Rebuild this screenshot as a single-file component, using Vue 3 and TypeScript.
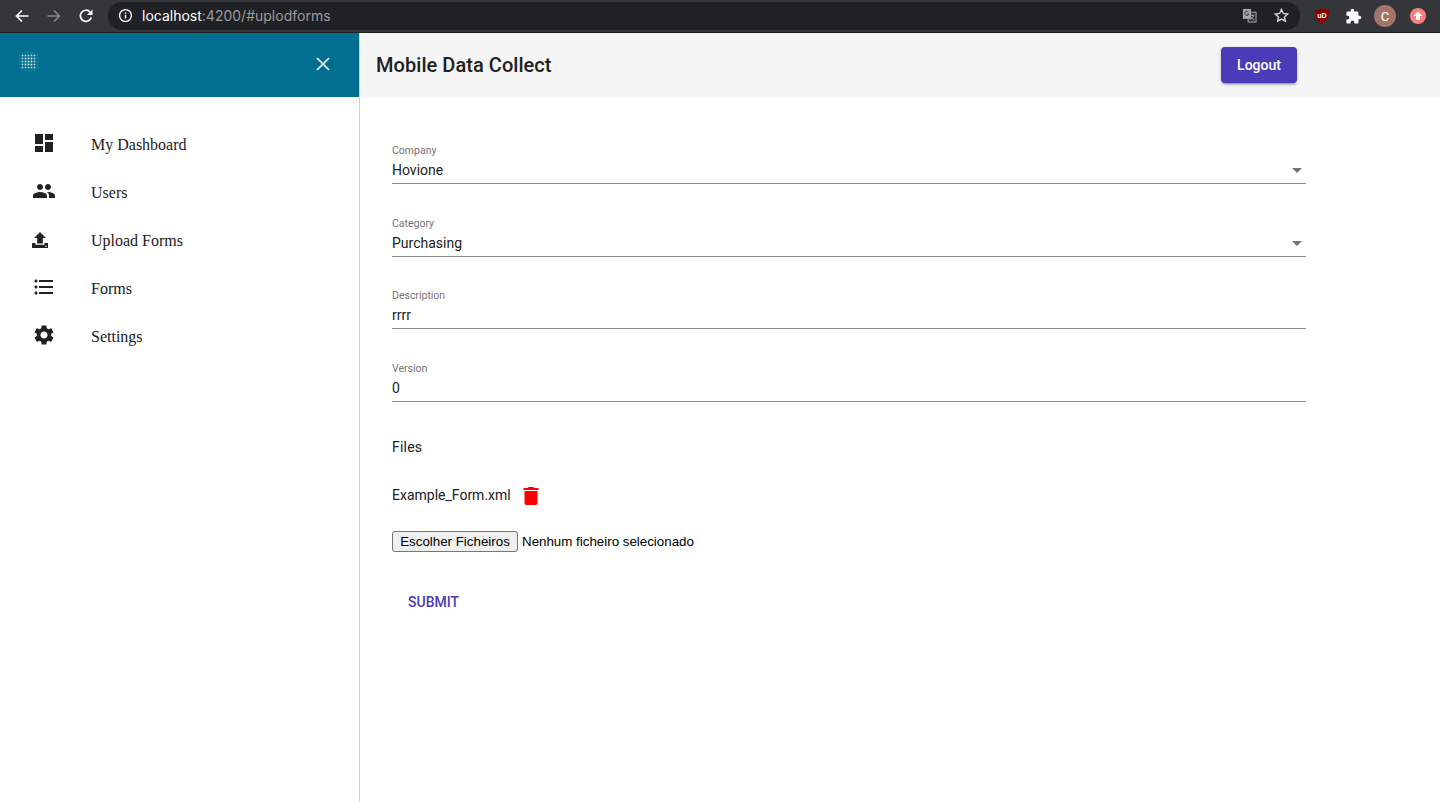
<script setup lang="ts">
interface NavItem {
  label: string;
  icon: string;
  dot?: boolean;
}

const navItems: NavItem[] = [
  { label: 'My Dashboard', icon: 'M3 13h8V3H3v10zm0 8h8v-6H3v6zm10 0h8V11h-8v10zm0-18v6h8V3h-8z' },
  { label: 'Users', icon: 'M16 11c1.66 0 2.99-1.34 2.99-3S17.66 5 16 5s-3 1.34-3 3 1.34 3 3 3zm-8 0c1.66 0 2.99-1.34 2.99-3S9.66 5 8 5 5 6.34 5 8s1.34 3 3 3zm0 2c-2.33 0-7 1.17-7 3.5V19h14v-2.5C15 14.17 10.33 13 8 13zm8 0c-.29 0-.62.02-.97.05 1.16.84 1.97 1.97 1.97 3.45V19h6v-2.5c0-2.33-4.67-3.5-7-3.5z' },
  { label: 'Upload Forms', icon: 'M8 5l6 6h-3.200v5.500H5.200V11H2zM0 16h3.500v1.800h9V16H16v5H0z', dot: true },
  { label: 'Forms', icon: 'M4 10.5c-.83 0-1.5.67-1.5 1.5s.67 1.5 1.5 1.5 1.5-.67 1.5-1.5-.67-1.5-1.5-1.5zm0-6c-.83 0-1.5.67-1.5 1.5S3.17 7.5 4 7.5 5.5 6.83 5.5 6 4.83 4.5 4 4.5zm0 12c-.83 0-1.5.68-1.5 1.5s.68 1.5 1.5 1.5 1.5-.68 1.5-1.5-.67-1.5-1.5-1.5zM7 19h14v-2H7v2zm0-6h14v-2H7v2zm0-8v2h14V5H7z' },
  { label: 'Settings', icon: 'M19.14 12.94c.04-.3.06-.61.06-.94 0-.32-.02-.64-.07-.94l2.03-1.58c.18-.14.23-.41.12-.61l-1.92-3.32c-.12-.22-.37-.29-.59-.22l-2.39.96c-.5-.38-1.03-.7-1.62-.94l-.36-2.54c-.04-.24-.24-.41-.48-.41h-3.84c-.24 0-.43.17-.47.41l-.36 2.54c-.59.24-1.13.57-1.62.94l-2.39-.96c-.22-.08-.47 0-.59.22L2.74 8.87c-.12.21-.08.47.12.61l2.03 1.58c-.05.3-.09.63-.09.94s.02.64.07.94l-2.03 1.58c-.18.14-.23.41-.12.61l1.92 3.32c.12.22.37.29.59.22l2.39-.96c.5.38 1.03.7 1.62.94l.36 2.54c.05.24.24.41.48.41h3.84c.24 0 .44-.17.47-.41l.36-2.54c.59-.24 1.13-.56 1.62-.94l2.39.96c.22.08.47 0 .59-.22l1.92-3.32c.12-.22.07-.47-.12-.61l-2.01-1.58zM12 15.6c-1.98 0-3.6-1.62-3.6-3.6s1.62-3.6 3.6-3.6 3.6 1.62 3.6 3.6-1.62 3.6-3.6 3.6z' },
];

interface Field {
  label: string;
  value: string;
  select: boolean;
}

const fields: Field[] = [
  { label: 'Company', value: 'Hovione', select: true },
  { label: 'Category', value: 'Purchasing', select: true },
  { label: 'Description', value: 'rrrr', select: false },
  { label: 'Version', value: '0', select: false },
];

// dot grid of the small logo, brighter towards the middle
const dots: { x: number; y: number; o: number }[] = [];
for (let x = 0; x < 7; x++) {
  for (let y = 0; y < 7; y++) {
    const d = Math.hypot(x - 3, y - 3);
    if (d < 3.7) {
      let o = 0.15;
      if (d < 1.5) o = 1;
      else if (d < 2.9) o = 0.75;
      dots.push({ x: x * 3 + 1.5, y: y * 3 + 1.5, o });
    }
  }
}
</script>

<template>
  <div class="page">
    <div class="browser-bar">
      <svg class="bar-icon" viewBox="0 0 16 16" width="16" height="16"><path d="M14.5 8H2.5M8 2.5 2.5 8 8 13.5" fill="none" stroke="#fff" stroke-width="1.7" /></svg>
      <svg class="bar-icon" viewBox="0 0 16 16" width="16" height="16"><path d="M1.5 8h12M8 2.5 13.5 8 8 13.5" fill="none" stroke="#85868a" stroke-width="1.7" /></svg>
      <svg class="bar-icon" viewBox="0 0 16 16" width="16" height="16"><path d="M13.3 9.6A5.6 5.6 0 1 1 12 3.9" fill="none" stroke="#fff" stroke-width="1.7" /><path d="M14.5 1.5v5.6H8.9z" fill="#fff" /></svg>
      <div class="omnibox">
        <svg viewBox="0 0 16 16" width="15" height="15"><circle cx="8" cy="8" r="6.3" fill="none" stroke="#fff" stroke-width="1.4" /><path d="M8 7.2v4M8 4.6v1.5" stroke="#fff" stroke-width="1.5" /></svg>
        <span class="url"><span class="url-host">localhost</span>:4200/#uplodforms</span>
        <div class="omni-right">
          <svg viewBox="0 0 16 16" width="15" height="15"><rect x="6.500" y="4.500" width="8.500" height="10.500" fill="#35363a" stroke="#a8a9ac" /><path d="M8.500 8h4.500M10.700 7v1M12.300 8c-.4 2-1.800 3.500-3.500 4.300M9.500 9.500c.7 1.300 1.900 2.400 3.500 3" stroke="#a8a9ac" stroke-width=".9" fill="none" /><rect x="1" y="1" width="8.500" height="10.500" fill="#a8a9ac" /><path d="M7 4.300a2.300 2.300 0 1 0 .4 2.200H5.200" stroke="#35363a" stroke-width="1" fill="none" /></svg>
          <svg viewBox="0 0 24 24" width="17" height="17"><path d="m12 3.5 2.6 5.6 6.1.7-4.5 4.2 1.2 6.1-5.4-3-5.4 3 1.2-6.1-4.5-4.2 6.1-.7z" fill="none" stroke="#d5d6d8" stroke-width="2" /></svg>
        </div>
      </div>
      <div class="extensions">
        <svg viewBox="0 0 16 16" width="16" height="16"><path d="M8 .3 15 2.500c0 6.500-1.500 10.500-7 13.200C2.500 13 1 9 1 2.500z" fill="#8a0000" /><text x="8" y="10" class="ub-text" text-anchor="middle">uD</text></svg>
        <svg viewBox="0 0 24 24" width="17" height="17"><path d="M20.500 11H19V7c0-1.100-.9-2-2-2h-4V3.500a2.500 2.500 0 0 0-5 0V5H4c-1.100 0-2 .9-2 2v3.800h1.500a2.700 2.700 0 0 1 0 5.400H2V20c0 1.100.9 2 2 2h3.800v-1.500a2.700 2.700 0 0 1 5.400 0V22H17c1.100 0 2-.9 2-2v-4h1.500a2.500 2.500 0 0 0 0-5z" fill="#fff" /></svg>
        <span class="avatar">C</span>
        <svg class="ext-last" viewBox="0 0 16 16" width="16" height="16"><circle cx="8" cy="8" r="8" fill="#f98080" /><path d="M8 3.500 12.500 8H10v4H6V8H3.500z" fill="#fff" /></svg>
      </div>
    </div>

    <div class="shell">
      <aside class="sidebar">
        <div class="sidebar-head">
          <svg class="logo" viewBox="0 0 21 21" width="21" height="21">
            <rect v-for="(d, i) in dots" :key="i" :x="d.x - 0.8" :y="d.y - 0.8" width="1.6" height="1.6" fill="#fff" :opacity="d.o" />
          </svg>
          <svg class="close" viewBox="0 0 14 14" width="14" height="14"><path d="M1 1l12 12M13 1 1 13" stroke="#fff" stroke-width="1.7" /></svg>
        </div>
        <nav class="nav">
          <a v-for="item in navItems" :key="item.label" class="nav-item">
            <svg viewBox="0 0 24 24" width="24" height="24">
              <path :d="item.icon" fill="#212121" />
              <circle v-if="item.dot" cx="14" cy="19.300" r=".8" fill="#fff" />
            </svg>
            <span>{{ item.label }}</span>
          </a>
        </nav>
      </aside>

      <main class="main">
        <header class="topbar">
          <h1>Mobile Data Collect</h1>
          <button class="logout" type="button">Logout</button>
        </header>

        <form class="form" @submit.prevent>
          <div v-for="f in fields" :key="f.label" class="field">
            <label>{{ f.label }}</label>
            <div class="value">
              <span>{{ f.value }}</span>
              <i v-if="f.select" class="arrow"></i>
            </div>
          </div>

          <p class="files-title">Files</p>
          <div class="file-row">
            <span>Example_Form.xml</span>
            <svg viewBox="0 0 24 24" width="24" height="24"><path d="M5.500 19c0 1.100.9 2 2 2h9c1.100 0 2-.9 2-2V7h-13v12zM19.500 4h-4l-1-1h-5l-1 1h-4v2h15V4z" fill="#f00" /></svg>
          </div>
          <div class="file-input">
            <button type="button" class="choose">Escolher Ficheiros</button>
            <span>Nenhum ficheiro selecionado</span>
          </div>
          <button type="submit" class="submit">SUBMIT</button>
        </form>
      </main>
    </div>
  </div>
</template>

<style scoped>
.page {
  height: 802px;
  display: flex;
  flex-direction: column;
  overflow: hidden;
  font-family: Roboto, "Liberation Sans", sans-serif;
  color: #212121;
  background: #fff;
}

.browser-bar {
  height: 33px;
  flex: none;
  display: flex;
  align-items: center;
  padding-left: 14px;
  gap: 16px;
  background: #35363a;
  border-bottom: 1px solid #202124;
  box-sizing: border-box;
}
.bar-icon {
  flex: none;
}
.omnibox {
  flex: none;
  width: 1192px;
  height: 28px;
  margin-left: -2px;
  margin-top: -1px;
  display: flex;
  align-items: center;
  gap: 9px;
  padding: 0 10px;
  box-sizing: border-box;
  border-radius: 14px;
  background: #202124;
}
.url {
  font-family: Inter, "Liberation Sans", sans-serif;
  font-size: 14px;
  color: #9a9b9e;
}
.url-host {
  color: #fff;
}
.omni-right {
  margin-left: auto;
  display: flex;
  align-items: center;
  gap: 16px;
}
.extensions {
  flex: none;
  display: flex;
  align-items: center;
  gap: 15px;
  margin-left: -2px;
}
.ub-text {
  font-family: "Liberation Sans", sans-serif;
  font-size: 7px;
  font-weight: 700;
  fill: #fff;
}
.avatar {
  width: 22px;
  height: 22px;
  margin-left: -3px;
  border-radius: 50%;
  background: #a1756a;
  color: #fff;
  font-size: 13px;
  display: flex;
  align-items: center;
  justify-content: center;
}
.ext-last {
  margin-left: -1px;
}

.shell {
  flex: 1;
  display: flex;
  min-height: 0;
}

.sidebar {
  width: 360px;
  flex: none;
  box-sizing: border-box;
  border-right: 1px solid #d3d3d3;
}
.sidebar-head {
  height: 64px;
  display: flex;
  justify-content: space-between;
  align-items: flex-start;
  padding: 18px 29px 0 18px;
  box-sizing: border-box;
  background: #006f90;
}
.close {
  margin-top: 6px;
}
.nav {
  display: flex;
  flex-direction: column;
  padding-top: 24px;
}
.nav-item {
  height: 48px;
  display: flex;
  align-items: center;
  gap: 35px;
  padding-left: 32px;
  font-family: "Liberation Serif", serif;
  font-size: 16px;
  color: #212121;
}
.nav-item svg {
  margin-bottom: 4px;
}

.main {
  flex: 1;
  min-width: 0;
}
.topbar {
  height: 64px;
  display: flex;
  align-items: center;
  justify-content: space-between;
  padding: 0 143px 0 16px;
  box-sizing: border-box;
  background: #f5f5f5;
}
.topbar h1 {
  margin: 0;
  font-size: 20px;
  font-weight: 500;
  letter-spacing: 0.05px;
}
.logout {
  width: 76px;
  height: 36px;
  border: none;
  border-radius: 4px;
  background: #4a3cb8;
  color: #fff;
  font-family: inherit;
  font-size: 14px;
  font-weight: 500;
  box-shadow: 0 3px 1px -2px rgba(0, 0, 0, .2), 0 2px 2px 0 rgba(0, 0, 0, .14), 0 1px 5px 0 rgba(0, 0, 0, .12);
}

.form {
  width: 914px;
  margin-left: 32px;
  padding-top: 48px;
  font-size: 14px;
}
.field {
  height: 72.67px;
}
.field label {
  display: block;
  height: 12px;
  line-height: 12px;
  font-size: 10.5px;
  color: #757575;
}
.value {
  height: 27px;
  box-sizing: border-box;
  padding-top: 3px;
  line-height: 20px;
  display: flex;
  justify-content: space-between;
  align-items: flex-start;
  color: #212121;
  border-bottom: 1px solid #8c8c8c;
}
.arrow {
  width: 0;
  height: 0;
  margin: 8px 4px 0 0;
  border-left: 5px solid transparent;
  border-right: 5px solid transparent;
  border-top: 5px solid #757575;
}

.files-title {
  margin: 0;
  padding-top: 1px;
  font-size: 14px;
  line-height: 20px;
  letter-spacing: 0.2px;
}
.file-row {
  display: flex;
  align-items: center;
  gap: 8px;
  margin-top: 26px;
  height: 24px;
  color: #212121;
}
.file-row svg {
  margin-top: 2px;
}
.file-input {
  display: flex;
  align-items: center;
  gap: 4px;
  margin-top: 24px;
  color: #000;
  font-size: 13.33px;
  font-family: "Liberation Sans", Roboto, sans-serif;
}
.choose {
  width: 126px;
  height: 21px;
  padding: 0;
  border: 1px solid #767676;
  border-radius: 3px;
  background: #efefef;
  color: #000;
  font: inherit;
}
.submit {
  display: block;
  margin-top: 32px;
  padding: 0 16px;
  height: 36px;
  border: none;
  background: none;
  color: #4a3cb8;
  font-family: inherit;
  font-size: 14px;
  font-weight: 500;
}
</style>
